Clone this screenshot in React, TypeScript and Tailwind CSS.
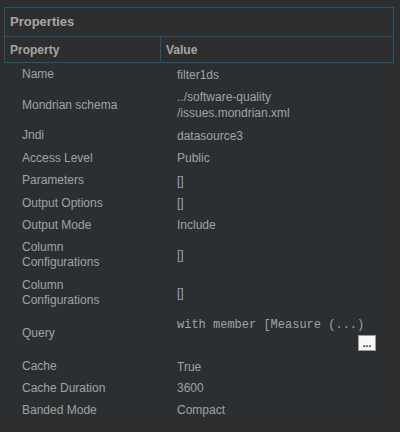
type Row = {
  label: string;
  value: React.ReactNode;
  h: string;
};

const rows: Row[] = [
  { label: "Name", value: "filter1ds", h: "h-[23px]" },
  {
    label: "Mondrian schema",
    value: (
      <span className="block leading-[16px]">
        ../software-quality
        <br />
        /issues.mondrian.xml
      </span>
    ),
    h: "h-[38px]",
  },
  { label: "Jndi", value: "datasource3", h: "h-[23px]" },
  { label: "Access Level", value: "Public", h: "h-[22px]" },
  { label: "Parameters", value: "[]", h: "h-[23px]" },
  { label: "Output Options", value: "[]", h: "h-[22px]" },
  { label: "Output Mode", value: "Include", h: "h-[22px]" },
  { label: "Column Configurations", value: "[]", h: "h-[38px]" },
  { label: "Column Configurations", value: "[]", h: "h-[37px]" },
  {
    label: "Query",
    value: (
      <div className="flex flex-col">
        <span className="font-['Liberation_Mono',monospace] leading-[16px]">
          with member [Measure (...)
        </span>
        <button className="ml-[181px] mt-[2px] flex h-[16px] w-[18px] items-end justify-center border border-[#9a9a9a] bg-[#f7f7f7] pb-[1px] text-[10px] font-bold leading-none text-[#222]">
          ...
        </button>
      </div>
    ),
    h: "h-[45px]",
  },
  { label: "Cache", value: "True", h: "h-[21px]" },
  { label: "Cache Duration", value: "3600", h: "h-[22px]" },
  { label: "Banded Mode", value: "Compact", h: "h-[22px]" },
];

export default function App() {
  return (
    <div className="h-[432px] w-[400px] bg-[#2e2e2e] pl-[4px] pr-[6px] pt-[7px] font-['Liberation_Sans',Arial,sans-serif] text-[#a2a2a2]">
      <div className="flex h-[30px] items-center border border-[#1f5873] pl-[5px] text-[13px] font-bold text-[#a6a6a6]">
        Properties
      </div>
      <div className="flex h-[26px] border border-t-0 border-[#1f5873] text-[12px] font-bold text-[#a6a6a6]">
        <div className="flex w-[155px] items-center pl-[5px]">Property</div>
        <div className="flex flex-1 items-center border-l border-[#1f5873] pl-[5px]">Value</div>
      </div>
      <div className="w-[389px] bg-[#2b2f32] text-[12px]">
        {rows.map((r, i) => (
          <div key={i} className={`flex items-center ${r.h}`}>
            <div className="w-[173px] pl-[18px] pr-[45px] leading-[15px]">{r.label}</div>
            <div className="flex-1 leading-[16px]">{r.value}</div>
          </div>
        ))}
      </div>
    </div>
  );
}
